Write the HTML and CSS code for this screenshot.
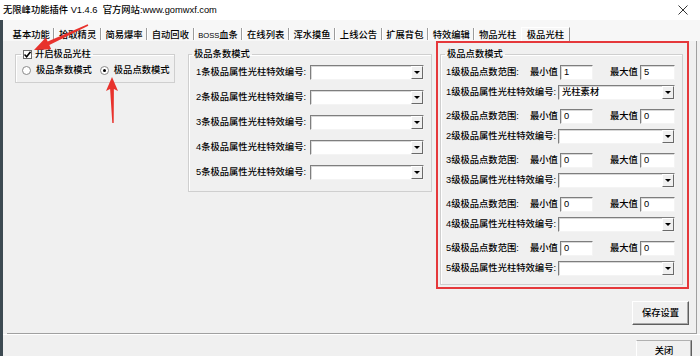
FILE: index.html
```html
<!DOCTYPE html>
<html>
<head>
  <meta charset="utf-8">
  <title>无限峰功能插件</title>
  <link rel="stylesheet" href="styles.css">
</head>
<body>
  <div class="window">
    <div class="titlebar">
      <span class="title">无限峰功能插件 V1.4.6&nbsp;&nbsp;官方网站:www.gomwxf.com</span>
      <svg class="close-x" width="10" height="10" viewBox="0 0 10 10"><path d="M0.5 0.5 L9.5 9.5 M9.5 0.5 L0.5 9.5" stroke="#333" stroke-width="1"/></svg>
    </div>
    <div class="main">
      <div class="tabs">
        <span class="tab">基本功能</span><span class="sep"></span>
        <span class="tab">拾取精灵</span><span class="sep"></span>
        <span class="tab">简易爆率</span><span class="sep"></span>
        <span class="tab">自动回收</span><span class="sep"></span>
        <span class="tab"><span class="latin">BOSS</span>血条</span><span class="sep"></span>
        <span class="tab">在线列表</span><span class="sep"></span>
        <span class="tab">浑水摸鱼</span><span class="sep"></span>
        <span class="tab">上线公告</span><span class="sep"></span>
        <span class="tab">扩展背包</span><span class="sep"></span>
        <span class="tab">特效编辑</span><span class="sep"></span>
        <span class="tab">物品光柱</span>
        <span class="tab active">极品光柱</span>
      </div>
      <div class="page">
        <fieldset class="group switch-box">
          <legend><span class="checkbox"><svg width="7" height="7" viewBox="0 0 7 7"><path d="M0.5 3.5 L2.6 5.8 L6.5 0.8" fill="none" stroke="#000" stroke-width="1.5"/></svg></span>开启极品光柱</legend>
          <div class="radios">
            <label class="radio"><span class="dot"></span>极品条数模式</label>
            <label class="radio checked"><span class="dot"></span>极品点数模式</label>
          </div>
        </fieldset>

        <fieldset class="group count-box">
          <legend>极品条数模式</legend>
          <div class="row"><span class="label">1条极品属性光柱特效编号:</span><span class="combo"><span class="value"></span><span class="drop"></span></span></div>
          <div class="row"><span class="label">2条极品属性光柱特效编号:</span><span class="combo"><span class="value"></span><span class="drop"></span></span></div>
          <div class="row"><span class="label">3条极品属性光柱特效编号:</span><span class="combo"><span class="value"></span><span class="drop"></span></span></div>
          <div class="row"><span class="label">4条极品属性光柱特效编号:</span><span class="combo"><span class="value"></span><span class="drop"></span></span></div>
          <div class="row"><span class="label">5条极品属性光柱特效编号:</span><span class="combo"><span class="value"></span><span class="drop"></span></span></div>
        </fieldset>

        <div class="right-col">
          <div class="highlight">
            <fieldset class="group point-box">
              <legend>极品点数模式</legend>
              <div class="level">
                <div class="range"><span class="rlabel">1级极品点数范围:</span><span class="mm">最小值</span><span class="field min">1</span><span class="mm max-l">最大值</span><span class="field max">5</span></div>
                <div class="pick"><span class="plabel">1级极品属性光柱特效编号:</span><span class="combo"><span class="value">光柱素材</span><span class="drop"></span></span></div>
              </div>
              <div class="level">
                <div class="range"><span class="rlabel">2级极品点数范围:</span><span class="mm">最小值</span><span class="field min">0</span><span class="mm max-l">最大值</span><span class="field max">0</span></div>
                <div class="pick"><span class="plabel">2级极品属性光柱特效编号:</span><span class="combo"><span class="value"></span><span class="drop"></span></span></div>
              </div>
              <div class="level">
                <div class="range"><span class="rlabel">3级极品点数范围:</span><span class="mm">最小值</span><span class="field min">0</span><span class="mm max-l">最大值</span><span class="field max">0</span></div>
                <div class="pick"><span class="plabel">3级极品属性光柱特效编号:</span><span class="combo"><span class="value"></span><span class="drop"></span></span></div>
              </div>
              <div class="level">
                <div class="range"><span class="rlabel">4级极品点数范围:</span><span class="mm">最小值</span><span class="field min">0</span><span class="mm max-l">最大值</span><span class="field max">0</span></div>
                <div class="pick"><span class="plabel">4级极品属性光柱特效编号:</span><span class="combo"><span class="value"></span><span class="drop"></span></span></div>
              </div>
              <div class="level">
                <div class="range"><span class="rlabel">5级极品点数范围:</span><span class="mm">最小值</span><span class="field min">0</span><span class="mm max-l">最大值</span><span class="field max">0</span></div>
                <div class="pick"><span class="plabel">5级极品属性光柱特效编号:</span><span class="combo"><span class="value"></span><span class="drop"></span></span></div>
              </div>
            </fieldset>
          </div>
          <button type="button" class="btn save">保存设置</button>
        </div>
      </div>
      <div class="footer">
        <button type="button" class="btn close">关闭</button>
      </div>
    </div>

    <!-- annotation arrows drawn over the screenshot -->
    <svg class="marks" width="700" height="356" viewBox="0 0 700 356">
      <polygon points="34,50 51.2,49.2 49.3,45.1 88.3,25.7 87.7,24.3 47.7,41.5 45.8,37.4" fill="#e8322c"/>
      <polygon points="112,77 118,91 113.9,89 113.7,123 112.3,123 110.1,89 106,91" fill="#e8322c"/>
    </svg>
  </div>
</body>
</html>
```

FILE: styles.css
```css
* {
  box-sizing: border-box;
}
body {
  margin: 0;
  width: 700px;
  height: 356px;
  overflow: hidden;
  background: #f0f0f0;
  font: 500 9.3px/14px "Liberation Sans", "Noto Sans CJK SC", sans-serif;
  color: #000;
}
.window {
  position: relative;
  width: 700px;
  height: 356px;
  display: flex;
  flex-direction: column;
  overflow: hidden;
}
.titlebar {
  flex: none;
  height: 20px;
  background: #fff;
  display: flex;
  align-items: center;
  justify-content: space-between;
  padding: 0 12px 0 3px;
}
.title {
  color: #000;
}
.main {
  flex: 1;
  min-height: 0;
  display: flex;
  flex-direction: column;
  border-left: 3px solid #3d4a52;
}
/* tab strip */
.tabs {
  flex: none;
  height: 21px;
  padding: 7px 0 0 6px;
  display: flex;
  align-items: stretch;
  background: #f7f7f7;
}
.tab {
  height: 14px;
  padding: 1px 3.6px 0;
  white-space: nowrap;
}
.tab .latin {
  font-size: 7.6px;
}
.sep {
  width: 2px;
  height: 12px;
  margin-top: 1px;
  border-left: 1px solid #9c9c9c;
  border-right: 1px solid #fff;
}
.tab.active {
  margin-left: 1px;
  padding: 0 5px;
  border-top: 1px solid #fff;
  border-left: 1px solid #fff;
  border-right: 1px solid #8c8c8c;
}
/* tab page */
.page {
  flex: none;
  height: 293px;
  width: 690px;
  margin-left: 4px;
  padding: 0 8px;
  display: flex;
  align-items: flex-start;
  border-bottom: 1px solid #a0a0a0;
  border-right: 1px solid #a0a0a0;
}
.group {
  margin: 0;
  min-width: 0;
  border: 1px solid #cfcfcf;
  box-shadow: inset 1px 1px 0 #fff;
}
.group legend {
  padding: 0 2px;
  height: 14px;
  line-height: 14px;
  color: #000;
}
.switch-box {
  flex: none;
  width: 160px;
  margin-top: 6px;
  padding: 2px 0 5px 6px;
  overflow: hidden;
}
.switch-box legend {
  margin-left: -1px;
  display: flex;
  align-items: center;
}
.checkbox {
  width: 9px;
  height: 9px;
  margin-right: 3px;
  background: #fff;
  border: 1px solid #6e6e6e;
  display: flex;
  align-items: center;
  justify-content: center;
}
.radios {
  display: flex;
  height: 14px;
  white-space: nowrap;
}
.radio {
  display: flex;
  align-items: center;
  margin-right: 8px;
}
.radio.checked {
  margin-right: 0;
}
.dot {
  flex: none;
  width: 9px;
  height: 9px;
  margin-right: 5px;
  border-radius: 50%;
  background: #fff;
  border: 1px solid #8a8a8a;
  display: flex;
  align-items: center;
  justify-content: center;
}
.radio.checked .dot::after {
  content: "";
  width: 3px;
  height: 3px;
  border-radius: 50%;
  background: #000;
}
.count-box {
  flex: none;
  width: 244px;
  margin-top: 6px;
  margin-left: 13px;
  padding: 3px 7px 11px 7px;
}
.count-box legend {
  margin-left: -4px;
}
.row {
  height: 16px;
  display: flex;
  align-items: center;
  margin-bottom: 9px;
}
.row:last-child {
  margin-bottom: 0;
}
.label {
  flex: 1;
  white-space: nowrap;
}
.combo {
  flex: none;
  width: 114px;
  height: 15px;
  display: flex;
  background: #fff;
  border: 1px solid;
  border-color: #7e7e7e #f4f4f4 #f4f4f4 #7e7e7e;
  box-shadow: inset 1px 1px 0 #d8d8d8;
}
.combo .value {
  flex: 1;
  padding-left: 3px;
  line-height: 13px;
}
.drop {
  width: 12px;
  height: 13px;
  background: #f0f0f0;
  border: 1px solid;
  border-color: #fff #6a6a6a #6a6a6a #fff;
  display: flex;
  align-items: center;
  justify-content: center;
}
.drop::after {
  content: "";
  border-left: 3px solid transparent;
  border-right: 3px solid transparent;
  border-top: 3px solid #000;
}
/* right column */
.right-col {
  flex: none;
  margin-left: 4px;
  width: 253px;
  display: flex;
  flex-direction: column;
  align-items: flex-end;
}
.highlight {
  width: 253px;
  border: 2px solid #e5383b;
  padding: 4px 4px 2px 2px;
}
.point-box {
  width: 243px;
  padding: 3px 7px 8px 5px;
}
.point-box legend {
  margin-left: -1px;
}
.level {
  margin-bottom: 8px;
}
.level:last-child {
  margin-bottom: 0;
}
.range,
.pick {
  height: 16px;
  display: flex;
  align-items: center;
  white-space: nowrap;
}
.pick {
  margin-top: 4px;
}
.rlabel {
  flex: none;
  width: 84px;
}
.mm {
  flex: none;
  width: 30px;
}
.max-l {
  margin-left: 17px;
}
.field {
  flex: none;
  height: 15px;
  padding-left: 3px;
  line-height: 13px;
  background: #fff;
  border: 1px solid;
  border-color: #7e7e7e #f4f4f4 #f4f4f4 #7e7e7e;
  box-shadow: inset 1px 1px 0 #d8d8d8;
}
.field.min {
  width: 33px;
}
.field.max {
  width: 35px;
}
.plabel {
  flex: none;
  width: 112px;
}
.pick .combo {
  width: 117px;
}
/* buttons */
.btn {
  font: inherit;
  color: #000;
  background: #f0f0f0;
  border: 1px solid;
  border-color: #fff #5e5e5e #5e5e5e #fff;
  box-shadow: inset -1px -1px 0 #a8a8a8;
  padding: 0;
}
.save {
  width: 57px;
  height: 24px;
  margin-top: 12px;
}
.footer {
  flex: none;
  height: 22px;
  overflow: hidden;
  border-top: 1px solid #fff;
  display: flex;
  justify-content: flex-end;
  align-items: flex-start;
  padding-right: 8px;
}
.close {
  flex: none;
  width: 56px;
  height: 22px;
  margin-top: 5px;
  border-top-color: #b0b0b0;
}
.marks {
  position: absolute;
  left: 0;
  top: 0;
  pointer-events: none;
}
```
